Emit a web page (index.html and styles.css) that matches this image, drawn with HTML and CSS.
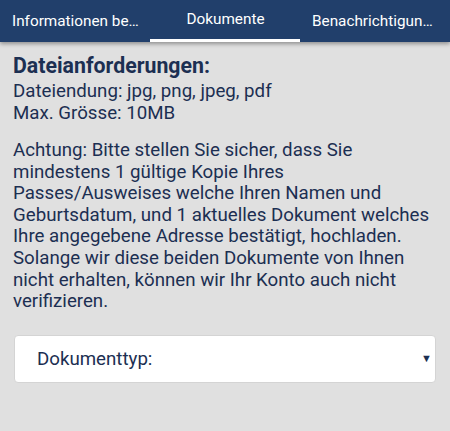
FILE: index.html
```html
<!DOCTYPE html>
<html lang="de">
<head>
    <meta charset="UTF-8">
    <meta name="viewport" content="width=device-width, initial-scale=1.0">
    <title>Dokumente</title>
    <link rel="stylesheet" href="styles.css">
</head>
<body>
    <div id="tabs">
        <div class="tab">Informationen bearbeiten</div>
        <div class="tab active">Dokumente</div>
        <div class="tab">Benachrichtigungen</div>
    </div>
    <div id="content">
        <h2>Dateianforderungen:</h2>
        <p class="req">Dateiendung: jpg, png, jpeg, pdf<br>Max. Grösse: 10MB</p>
        <p class="note">Achtung: Bitte stellen Sie sicher, dass Sie mindestens 1 gültige Kopie Ihres Passes/Ausweises welche Ihren Namen und Geburtsdatum, und 1 aktuelles Dokument welches Ihre angegebene Adresse bestätigt, hochladen. Solange wir diese beiden Dokumente von Ihnen nicht erhalten, können wir Ihr Konto auch nicht verifizieren.</p>
        <div class="select">
            <span>Dokumenttyp:</span>
            <span class="arrow">&#9660;</span>
        </div>
    </div>
</body>
</html>
```

FILE: styles.css
```css
* {
    margin: 0;
    padding: 0;
    box-sizing: border-box;
}
html, body {
    width: 100%;
    height: 100%;
    overflow: hidden;
}
body {
    font-family: Roboto, "Noto Sans", sans-serif;
    background-color: #e0e0e0;
    color: #1c2f52;
}
#tabs {
    display: flex;
    height: 42px;
    background-color: #213f6b;
    box-shadow: 0 2px 4px rgba(0, 0, 0, 0.35);
    position: relative;
    z-index: 2;
}
.tab {
    flex: 1;
    min-width: 0;
    color: #fff;
    font-size: 15.3px;
    line-height: 42px;
    text-align: center;
    padding: 0 11px 0 12px;
    white-space: nowrap;
    overflow: hidden;
    text-overflow: ellipsis;
    border-bottom: 3px solid transparent;
}
.tab.active {
    border-bottom-color: #fff;
    line-height: 39px;
}
#content {
    padding: 11px 13px 0 13px;
}
h2 {
    font-size: 21.3px;
    font-weight: bold;
    line-height: 25px;
    margin-bottom: 3px;
}
.req {
    font-size: 18.7px;
    line-height: 21.5px;
}
.note {
    font-size: 18.7px;
    line-height: 21.6px;
    margin-top: 16px;
}
.select {
    display: flex;
    justify-content: space-between;
    align-items: center;
    margin: 22px 1px 0 1px;
    height: 48px;
    background-color: #fff;
    border: 1px solid #d4d4d4;
    border-radius: 4px;
    padding: 0 3px 0 22px;
    font-size: 18.7px;
}
.arrow {
    font-size: 11px;
    color: #1c2f52;
}
```
